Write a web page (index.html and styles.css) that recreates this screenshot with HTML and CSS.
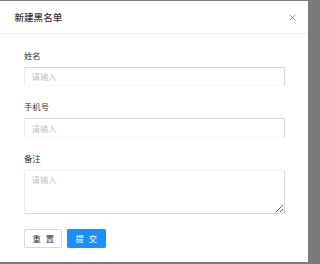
FILE: index.html
```html
<!DOCTYPE html>
<html lang="zh">
<head>
<meta charset="utf-8">
<title>新建黑名单</title>
<link rel="stylesheet" href="styles.css">
</head>
<body>
<div class="modal">
  <div class="modal-header">
    <div class="modal-title">新建黑名单</div>
    <span class="modal-close" aria-label="关闭">
      <svg width="7" height="7" viewBox="0 0 7 7"><path d="M0.5 0.5L6.5 6.5M6.5 0.5L0.5 6.5" stroke="#8c8c8c" stroke-width="0.9" fill="none"/></svg>
    </span>
  </div>
  <div class="modal-body">
    <form class="form">
      <div class="form-item">
        <label class="form-label">姓名</label>
        <input class="input" type="text" placeholder="请输入">
      </div>
      <div class="form-item">
        <label class="form-label">手机号</label>
        <input class="input" type="text" placeholder="请输入">
      </div>
      <div class="form-item">
        <label class="form-label">备注</label>
        <textarea class="textarea" placeholder="请输入"></textarea>
      </div>
      <div class="actions">
        <button type="button" class="btn">重 置</button>
        <button type="button" class="btn btn-primary">提 交</button>
      </div>
    </form>
  </div>
</div>
</body>
</html>
```
FILE: styles.css
```css
html, body {
  margin: 0;
  padding: 0;
  background: #7a7a7a;
  height: 264px;
  overflow: hidden;
}
body {
  padding-top: 1px;
  box-sizing: border-box;
  font-family: "Noto Sans CJK SC", "Liberation Sans", sans-serif;
  color: rgba(0, 0, 0, 0.85);
}
.modal {
  width: 308px;
  background: #fff;
}
.modal-header {
  display: flex;
  align-items: center;
  justify-content: space-between;
  height: 32.4px;
  padding: 0 12px 0 14.4px;
  border-bottom: 1px solid #f0f0f0;
}
.modal-title {
  font-size: 9.6px;
  line-height: 13.2px;
  font-weight: 500;
}
.modal-close {
  display: flex;
  width: 7px;
  height: 7px;
}
.modal-body {
  padding: 14.4px 23px 14.4px 24px;
}
.form {
  margin: 0;
}
.form-item {
  display: flex;
  flex-direction: column;
  margin-bottom: 14.4px;
}
.form-label {
  font-size: 8.4px;
  line-height: 13.2px;
  padding-bottom: 4.8px;
}
.input, .textarea {
  box-sizing: border-box;
  width: 100%;
  margin: 0;
  font-family: inherit;
  font-size: 8.4px;
  line-height: 13.2px;
  padding: 2.4px 6.6px;
  border: 1px solid #d9d9d9;
  border-radius: 1.2px;
  background: #fff;
  color: rgba(0, 0, 0, 0.85);
  outline: none;
}
.input {
  height: 19.2px;
  border-color: #d9d9d9 #d9d9d9 #f7f7f7 #efefef;
}
.textarea {
  height: 44.4px;
  display: block;
  resize: vertical;
  border-color: #eeeeee #d9d9d9 #d9d9d9 #efefef;
}
.input::placeholder, .textarea::placeholder {
  color: #bfbfbf;
}
.actions {
  display: flex;
  gap: 4.8px;
}
.btn {
  box-sizing: border-box;
  width: 38.4px;
  height: 19.2px;
  padding: 0 0 0 1.5px;
  white-space: nowrap;
  text-align: center;
  font-family: inherit;
  font-size: 8.4px;
  line-height: 13.2px;
  letter-spacing: 1.5px;
  border: 1px solid #d9d9d9;
  border-radius: 1.2px;
  background: #fff;
  color: rgba(0, 0, 0, 0.85);
  cursor: pointer;
}
.btn-primary {
  background: #1890ff;
  border-color: #1890ff;
  color: #fff;
}
```
